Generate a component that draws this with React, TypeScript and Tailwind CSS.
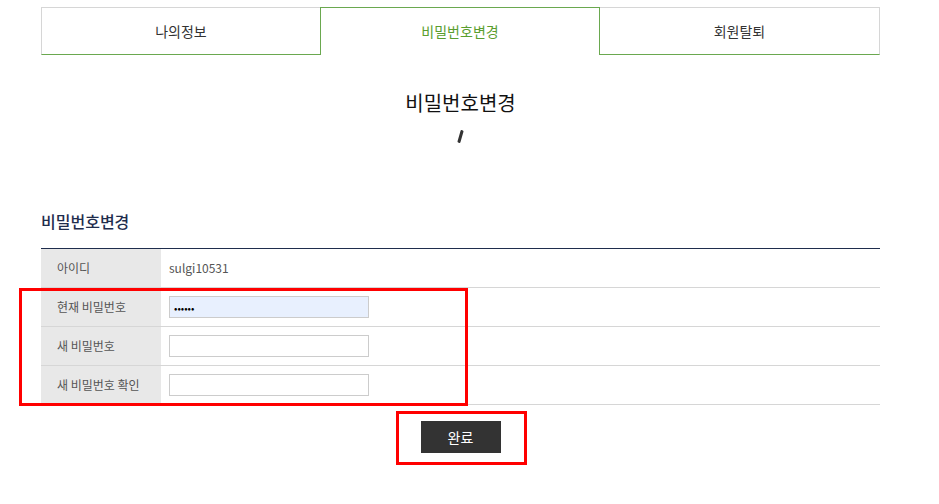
import React from "react";

const font = { fontFamily: '"Noto Sans CJK KR", "Noto Sans", sans-serif' };

function Row({ label, children }: { label: string; children: React.ReactNode }) {
  return (
    <div className="flex h-[39px] border-b border-[#d6d6d6]">
      <div className="flex w-[120px] items-center bg-[#e8e8e8] pl-[16px] text-[12px] text-[#555]">{label}</div>
      <div className="flex flex-1 items-center pl-[8px] text-[12px] text-[#555]">{children}</div>
    </div>
  );
}

export default function App() {
  return (
    <div className="relative h-[504px] w-[939px] bg-white" style={font}>
      <div className="ml-[41px] w-[839px] pt-[7px]">
        {/* tabs */}
        <div className="grid h-[48px] grid-cols-[279px_280px_280px]">
          <div className="flex items-center justify-center border-l border-t border-b border-l-[#d6d6d6] border-t-[#d6d6d6] border-b-[#6aa84f] text-[14px] text-[#333]">
            나의정보
          </div>
          <div className="flex items-center justify-center border-l border-r border-t border-[#6aa84f] text-[14px] text-[#5a9e2f]">
            비밀번호변경
          </div>
          <div className="flex items-center justify-center border-r border-t border-b border-r-[#d6d6d6] border-t-[#d6d6d6] border-b-[#6aa84f] text-[14px] text-[#333]">
            회원탈퇴
          </div>
        </div>

        {/* title */}
        <div className="mt-[34px] flex flex-col items-center">
          <h1 className="text-[20px] leading-[28px] text-[#111]">비밀번호변경</h1>
          <div className="mt-[13px] h-[13px] w-[3px] rotate-[16deg] rounded-[1px] bg-[#333]" />
        </div>

        {/* section */}
        <h2 className="mt-[67px] text-[16px] font-medium leading-[22px] text-[#1f2d4d]">비밀번호변경</h2>
        <div className="mt-[16px] border-t border-[#1f2d4d]">
          <Row label="아이디">sulgi10531</Row>
          <Row label="현재 비밀번호">
            <input
              type="password"
              defaultValue="123456"
              className="h-[22px] w-[200px] border border-[#ccc] bg-[#e8f0fe] px-[4px] text-[10px] text-black outline-none"
            />
          </Row>
          <Row label="새 비밀번호">
            <input type="password" className="h-[22px] w-[200px] border border-[#ccc] bg-white outline-none" />
          </Row>
          <Row label="새 비밀번호 확인">
            <input type="password" className="h-[22px] w-[200px] border border-[#ccc] bg-white outline-none" />
          </Row>
        </div>

        <div className="mt-[16px] flex justify-center">
          <button className="h-[32px] w-[80px] bg-[#333] text-[14px] text-white">완료</button>
        </div>
      </div>

      {/* annotation boxes */}
      <div className="absolute left-[19px] top-[288px] h-[118px] w-[449px] border-[3px] border-[#ff0000]" />
      <div className="absolute left-[396px] top-[411px] h-[54px] w-[131px] border-[3px] border-[#ff0000]" />
    </div>
  );
}
